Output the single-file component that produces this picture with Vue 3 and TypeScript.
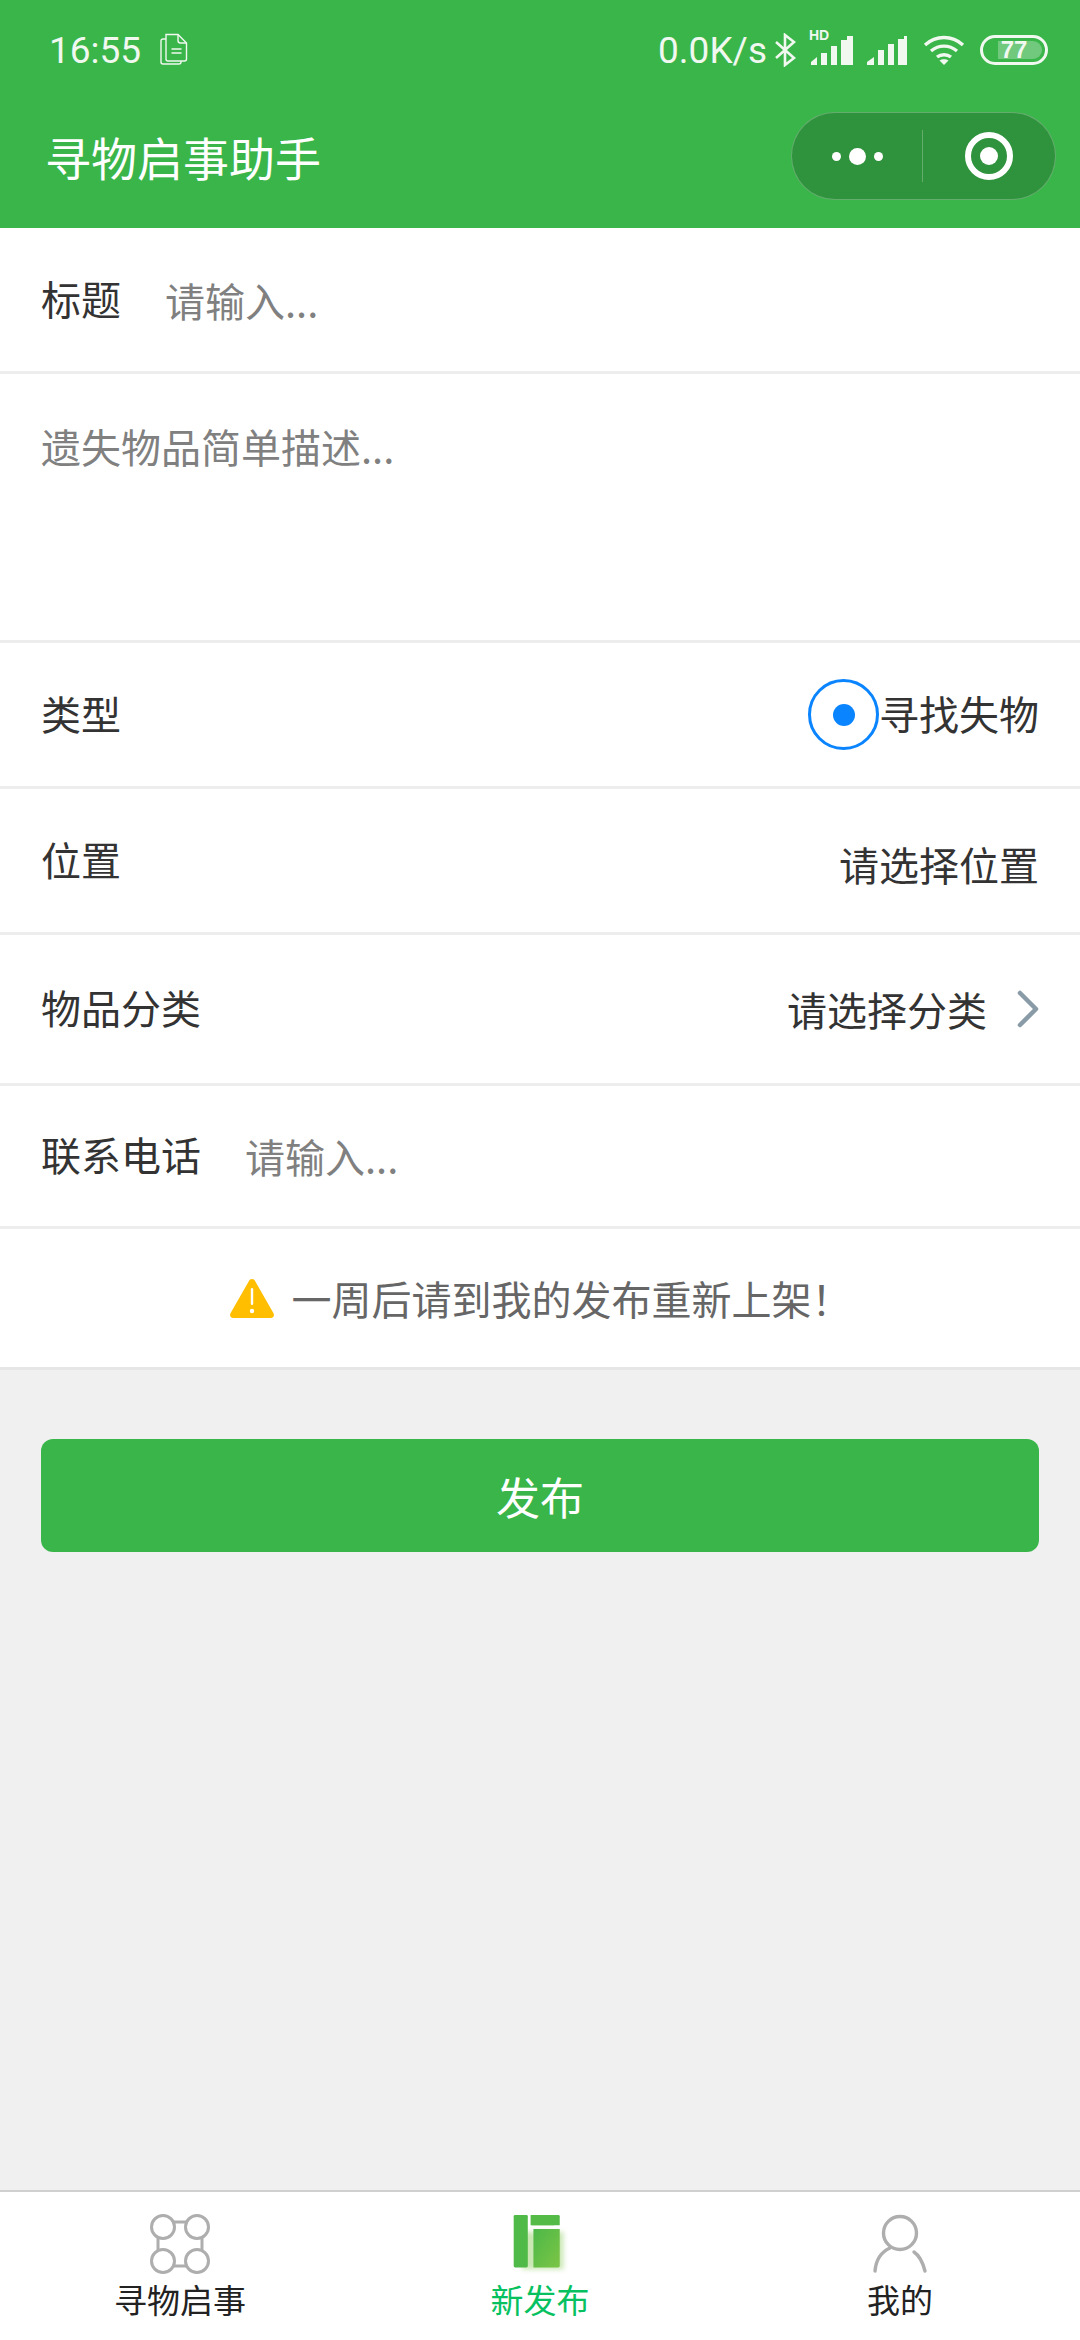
<script setup lang="ts">
import { reactive } from 'vue'

const form = reactive({
  title: '',
  description: '',
  phone: ''
})

const signalBars = [
  { x: 0, h: 6 },
  { x: 10, h: 12 },
  { x: 20, h: 19 },
  { x: 30, h: 25 },
  { x: 36, h: 29 }
]
</script>

<template>
  <div class="page">
    <header class="head">
      <div class="status">
        <div class="status-left">
          <span class="time">16:55</span>
          <svg class="doc" width="28" height="32" viewBox="0 0 28 32" fill="none" stroke="#f0f8f0" stroke-width="1.4">
            <path d="M6 1.5h12l8.500 8.500v16a2 2 0 0 1-2 2H8a2 2 0 0 1-2-2z" />
            <path d="M18 1.500v6a2.500 2.500 0 0 0 2.500 2.500h6" />
            <path d="M6 6H3a2 2 0 0 0-2 2v21a2 2 0 0 0 2 2h16a2 2 0 0 0 2-2v-1" />
            <path d="M11.500 16h10M11.500 20h10" />
          </svg>
        </div>
        <div class="status-right">
          <span class="speed">0.0K/s</span>
          <svg class="bt" width="22" height="34" viewBox="0 0 22 34" fill="none" stroke="#f0f8f0" stroke-width="2.600">
            <path d="M2 9l18 16-9 7V2l9 7L2 25" />
          </svg>
          <div class="signal hd">
            <span class="hd-text">HD</span>
            <svg width="42" height="29" viewBox="0 0 42 29" fill="#f0f8f0">
              <rect v-for="b in signalBars.slice(1)" :key="b.x" :x="b.x" :y="29 - b.h" width="6" :height="b.h" />
              <path d="M0 29v-3l6-5v8z" />
            </svg>
          </div>
          <svg class="signal2" width="42" height="29" viewBox="0 0 42 29" fill="#f0f8f0">
            <path d="M0 29v-3l7-5v8z" />
            <rect x="11" y="14" width="6" height="15" />
            <rect x="21" y="8" width="6" height="21" />
            <rect x="31" y="3" width="6" height="26" />
            <rect x="37" y="0" width="3" height="29" />
          </svg>
          <svg class="wifi" width="42" height="30" viewBox="0 0 42 30" fill="none" stroke="#f0f8f0" stroke-width="3.400">
            <path d="M2 10c11-10 27-10 38 0" />
            <path d="M8 16c8-6.500 18-6.500 26 0" />
            <path d="M14 22c4-3 10-3 14 0" />
            <path d="M21 30l-4.500-4.500c2.500-1.800 6.500-1.800 9 0z" fill="#f0f8f0" stroke="none" />
          </svg>
          <div class="battery">
            <span class="battery-fill"></span>
            <span class="battery-num">77</span>
          </div>
        </div>
      </div>
      <div class="nav">
        <h1 class="nav-title">寻物启事助手</h1>
        <div class="capsule">
          <div class="capsule-more">
            <i class="dot"></i><i class="dot big"></i><i class="dot"></i>
          </div>
          <span class="capsule-line"></span>
          <div class="capsule-close"><i></i></div>
        </div>
      </div>
    </header>

    <main class="main">
      <form class="form" @submit.prevent>
        <div class="row row-title">
          <span class="label">标题</span>
          <input v-model.trim="form.title" class="input" type="text" placeholder="请输入..." />
        </div>
        <div class="row row-area">
          <textarea v-model="form.description" class="area" placeholder="遗失物品简单描述..."></textarea>
        </div>
        <div class="row row-type">
          <span class="label">类型</span>
          <label class="radio">
            <span class="radio-box"><i></i></span>
            <span>寻找失物</span>
          </label>
        </div>
        <div class="row row-pos">
          <span class="label">位置</span>
          <span class="value low">请选择位置</span>
        </div>
        <div class="row row-cat">
          <span class="label">物品分类</span>
          <div class="picker">
            <span class="value">请选择分类</span>
            <svg width="22" height="38" viewBox="0 0 22 38" fill="none" stroke="#8a9ba8" stroke-width="4.500" stroke-linecap="round" stroke-linejoin="round">
              <path d="M3 3l16 16L3 35" />
            </svg>
          </div>
        </div>
        <div class="row row-phone">
          <span class="label">联系电话</span>
          <input v-model.trim="form.phone" class="input" type="tel" placeholder="请输入..." />
        </div>
        <div class="row notice">
          <svg width="46" height="42" viewBox="0 0 46 42">
            <path d="M23 2c1.500 0 2.500.8 3.200 2.200l18.300 32c1.200 2.400-.2 4.800-3 4.800H4.500c-2.800 0-4.200-2.400-3-4.800l18.300-32C20.500 2.800 21.500 2 23 2z" fill="#ffbe00" />
            <rect x="21.800" y="11" width="2.400" height="17" rx="1.200" fill="#fff" />
            <circle cx="23" cy="34" r="2.200" fill="#fff" />
          </svg>
          <span>一周后请到我的发布重新上架！</span>
        </div>
        <div class="submit-wrap">
          <button class="submit" type="submit">发布</button>
        </div>
      </form>
    </main>

    <nav class="tabs">
      <div class="tab">
        <svg width="60" height="60" viewBox="0 0 60 60" fill="none" stroke="#aeaeae" stroke-width="3">
          <circle cx="13" cy="13" r="11.500" />
          <circle cx="47" cy="13" r="11.500" />
          <circle cx="13" cy="47" r="11.500" />
          <circle cx="47" cy="47" r="11.500" />
          <path d="M22 8h16M22 52h16M8 23v14M52 23v14" />
        </svg>
        <span>寻物启事</span>
      </div>
      <div class="tab on">
        <svg width="62" height="66" viewBox="0 0 62 66">
          <defs>
            <linearGradient id="pub" x1="0" y1="0" x2="1" y2="1">
              <stop offset="0" stop-color="#4cb848" />
              <stop offset="1" stop-color="#7cc545" />
            </linearGradient>
            <filter id="soft" x="-20%" y="-20%" width="140%" height="140%">
              <feGaussianBlur stdDeviation="3" />
            </filter>
          </defs>
          <rect x="12" y="20" width="44" height="40" fill="#7cc545" opacity="0.4" filter="url(#soft)" />
          <rect x="3" y="2" width="15" height="56" rx="1.500" fill="#4fba47" />
          <path d="M21 2h26a1.500 1.500 0 0 1 1.500 1.500V13H21z" fill="url(#pub)" transform="translate(7 0) scale(.86 1) translate(-3 0)" />
          <path d="M21 17h28v39.500a1.500 1.500 0 0 1-1.500 1.500H21z" fill="url(#pub)" transform="translate(3 0)" />
          <path d="M21 2h29.500A1.500 1.500 0 0 1 52 3.500V13H21z" fill="#55bb47" transform="translate(0 0)" />
        </svg>
        <span>新发布</span>
      </div>
      <div class="tab">
        <svg width="60" height="60" viewBox="0 0 60 60" fill="none" stroke="#aeaeae" stroke-width="3.400" stroke-linecap="round">
          <circle cx="30" cy="19" r="16.500" />
          <path d="M20 34C11 38 6 46 5 57" />
          <path d="M44 38c6 4 9 11 11 19" />
        </svg>
        <span>我的</span>
      </div>
    </nav>
  </div>
</template>

<style scoped>
.page {
  width: 1080px;
  height: 2340px;
  display: flex;
  flex-direction: column;
  background: #f0f0f0;
  color: #333;
  font-family: 'Noto Sans CJK SC', 'Liberation Sans', sans-serif;
}

.head {
  height: 228px;
  background: #3ab54a;
  color: #fff;
  flex: none;
}

.status {
  height: 100px;
  padding: 0 32px 0 49px;
  display: flex;
  align-items: center;
  justify-content: space-between;
  color: #f0f8f0;
}

.status-left,
.status-right {
  display: flex;
  align-items: center;
}

.time,
.speed {
  font-family: Roboto, 'Liberation Sans', sans-serif;
  font-size: 37px;
}

.doc {
  margin-left: 19px;
  margin-top: -2px;
}

.bt {
  margin-left: 7px;
}

.signal {
  position: relative;
  margin-left: 15px;
  width: 42px;
  height: 29px;
}

.hd-text {
  position: absolute;
  left: -2px;
  top: -8px;
  font: bold 14px 'Liberation Sans', sans-serif;
  line-height: 14px;
}

.signal2 {
  margin-left: 14px;
}

.wifi {
  margin-left: 14px;
}

.battery {
  position: relative;
  width: 68px;
  height: 30px;
  margin-left: 15px;
  border: 3px solid #f0f8f0;
  border-radius: 15px;
  box-sizing: border-box;
  display: flex;
  align-items: center;
  justify-content: center;
}

.battery-fill {
  position: absolute;
  left: 15px;
  top: 3px;
  bottom: 3px;
  right: 3px;
  border-radius: 0 10px 10px 0;
  background: rgba(255, 255, 255, 0.28);
}

.battery-num {
  position: relative;
  font: bold 24px 'Liberation Sans', sans-serif;
  line-height: 24px;
}

.nav {
  height: 128px;
  padding: 0 24px 0 45px;
  display: flex;
  align-items: center;
  justify-content: space-between;
}

.nav-title {
  margin: 0 0 16px;
  font-size: 46px;
  font-weight: 400;
}

.capsule {
  width: 265px;
  height: 88px;
  margin-bottom: 16px;
  box-sizing: border-box;
  border: 1px solid rgba(255, 255, 255, 0.25);
  border-radius: 44px;
  background: #2f923c;
  display: flex;
  align-items: center;
}

.capsule-more {
  flex: 1;
  display: flex;
  align-items: center;
  justify-content: center;
  gap: 8px;
}

.dot {
  width: 9px;
  height: 9px;
  border-radius: 50%;
  background: #fff;
}

.dot.big {
  width: 17px;
  height: 17px;
}

.capsule-line {
  width: 1px;
  height: 52px;
  background: rgba(255, 255, 255, 0.25);
}

.capsule-close {
  width: 132px;
  display: flex;
  justify-content: center;
}

.capsule-close i {
  width: 48px;
  height: 48px;
  box-sizing: border-box;
  border: 6px solid #fff;
  border-radius: 50%;
  display: flex;
  align-items: center;
  justify-content: center;
}

.capsule-close i::after {
  content: '';
  width: 18px;
  height: 18px;
  border-radius: 50%;
  background: #fff;
}

.main {
  flex: 1;
}

.form {
  display: flex;
  flex-direction: column;
}

.row {
  box-sizing: border-box;
  display: flex;
  align-items: center;
  justify-content: space-between;
  padding: 0 41px;
  background: #fff;
  border-bottom: 3px solid #ededed;
  font-size: 40px;
  color: #333;
}

.row-title {
  height: 146px;
  justify-content: flex-start;
}

.row-area {
  height: 269px;
  align-items: flex-start;
}

.row-type {
  height: 146px;
}

.row-pos {
  height: 146px;
}

.row-cat {
  height: 151px;
}

.row-phone {
  height: 143px;
  justify-content: flex-start;
}

.label {
  flex: none;
  margin-top: -4px;
}

.input {
  flex: 1;
  min-width: 0;
  margin-left: 44px;
  padding: 0;
  border: 0;
  outline: 0;
  background: transparent;
  font: inherit;
  color: #333;
}

.input::placeholder,
.area::placeholder {
  color: #808080;
  opacity: 1;
}

.area {
  width: 100%;
  height: 200px;
  margin-top: 44px;
  padding: 0;
  border: 0;
  outline: 0;
  resize: none;
  background: transparent;
  font: inherit;
  line-height: 1.4;
}

.radio {
  display: flex;
  align-items: center;
  margin-right: 0;
}

.radio span:last-child {
  margin-top: -4px;
}

.radio-box {
  width: 71px;
  height: 71px;
  box-sizing: border-box;
  border: 3px solid #0a84ff;
  border-radius: 50%;
  display: flex;
  align-items: center;
  justify-content: center;
}

.radio-box i {
  width: 22px;
  height: 22px;
  border-radius: 50%;
  background: #0a84ff;
}

.value.low {
  margin-top: 6px;
}

.picker {
  display: flex;
  align-items: center;
  gap: 30px;
}

.notice {
  height: 141px;
  justify-content: center;
  gap: 17px;
  color: #666;
  border-bottom-color: #e6e6e6;
}

.submit-wrap {
  padding: 69px 41px 0;
}

.submit {
  width: 100%;
  height: 113px;
  border: 0;
  border-radius: 12px;
  background: #3ab54a;
  color: #fff;
  font: inherit;
  font-size: 44px;
}

.tabs {
  flex: none;
  height: 150px;
  box-sizing: border-box;
  background: #fff;
  border-top: 2px solid #d0d0d0;
  display: grid;
  grid-template-columns: repeat(3, 1fr);
}

.tab {
  display: flex;
  flex-direction: column;
  align-items: center;
  padding-top: 21px;
  font-size: 33px;
  line-height: 44px;
  color: #222;
}

.tab svg {
  height: 62px;
  margin-bottom: 2px;
}

.tab.on {
  color: #07c160;
}
</style>

<style>
html,
body {
  margin: 0;
}
</style>
